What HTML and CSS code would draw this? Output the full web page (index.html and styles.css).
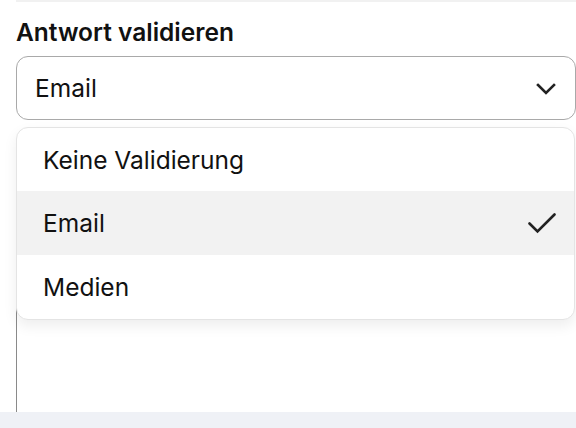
FILE: index.html
```html
<!DOCTYPE html>
<html lang="de">
<head>
<meta charset="utf-8">
<link rel="stylesheet" href="styles.css">
</head>
<body>
<div class="page">
  <div class="content">
    <div class="topbar"></div>
    <div class="label">Antwort validieren</div>
    <div class="field">
      <div class="select">
        <span class="select-value">Email</span>
        <svg class="chevron" width="20" height="12" viewBox="0 0 20 12"><path d="M2 2 L10 10 L18 2" fill="none" stroke="#222" stroke-width="2.6" stroke-linecap="square" stroke-linejoin="miter"/></svg>
      </div>
      <div class="area"></div>
      <ul class="menu">
        <li class="item">Keine Validierung</li>
        <li class="item active">Email
          <svg class="check" width="28" height="22" viewBox="0 0 28 22"><path d="M1.5 11.5 L9.5 19.5 L26.5 2.5" fill="none" stroke="#222" stroke-width="2.6" stroke-linecap="round" stroke-linejoin="miter"/></svg>
        </li>
        <li class="item">Medien</li>
      </ul>
    </div>
  </div>
  <div class="footer"></div>
</div>
</body>
</html>
```
FILE: styles.css
```css
* { box-sizing: border-box; }
html, body { margin: 0; padding: 0; }
body {
  background: #fff;
  font-family: "Inter", "Noto Sans", sans-serif;
  color: #111;
  width: 576px;
  height: 428px;
  overflow: hidden;
}
.page {
  height: 428px;
  display: flex;
  flex-direction: column;
}
.content {
  flex: 1;
  padding-left: 16px;
  overflow: hidden;
  display: flex;
  flex-direction: column;
}
.topbar {
  height: 2px;
  background: #f1f1f1;
}
.label {
  margin-top: 16px;
  font-size: 24.5px;
  font-weight: 600;
  line-height: 28px;
  height: 28px;
}
.field {
  position: relative;
  margin-top: 10px;
  flex: 1;
  display: flex;
  flex-direction: column;
}
.select {
  height: 64px;
  border: 1px solid #a9a9a9;
  border-radius: 12px;
  display: flex;
  align-items: center;
  justify-content: space-between;
  padding: 0 19px 0 18px;
  font-size: 24.5px;
}
.chevron { margin-top: 2px; }
.area {
  flex: 1;
  margin-top: 40px;
  border-left: 1px solid #8a8a8a;
}
.menu {
  position: absolute;
  left: 0;
  right: 1px;
  top: 71px;
  margin: 0;
  padding: 0;
  list-style: none;
  background: #fff;
  border: 1px solid #e4e4e4;
  border-radius: 12px;
  box-shadow: 0 6px 14px rgba(0, 0, 0, 0.07);
  overflow: hidden;
}
.item {
  height: 64px;
  display: flex;
  align-items: center;
  justify-content: space-between;
  padding: 0 18px 0 26px;
  font-size: 24.5px;
}
.item:first-child { height: 63px; }
.item.active { background: #f2f2f2; }
.footer {
  height: 16px;
  background: #eff1f6;
}
```
